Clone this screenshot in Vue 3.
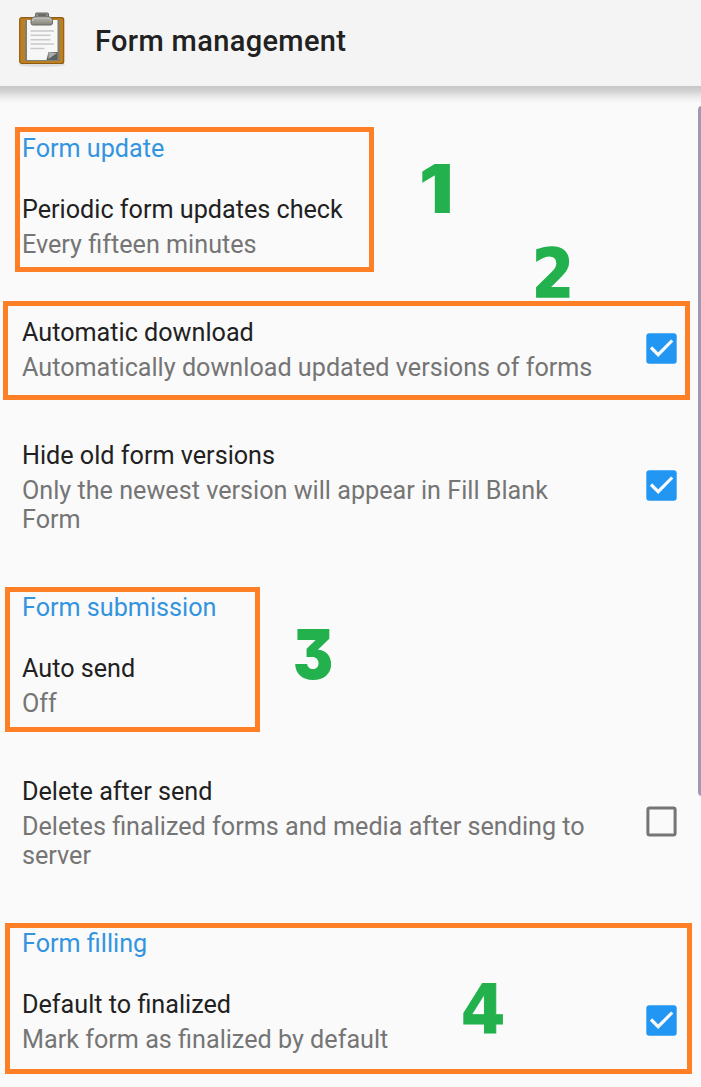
<script setup>
const sections = [
  {
    title: 'Form update',
    items: [
      { title: 'Periodic form updates check', summary: 'Every fifteen minutes' },
      { title: 'Automatic download', summary: 'Automatically download updated versions of forms', checked: true },
      { title: 'Hide old form versions', summary: 'Only the newest version will appear in Fill Blank Form', checked: true },
    ],
  },
  {
    title: 'Form submission',
    items: [
      { title: 'Auto send', summary: 'Off' },
      { title: 'Delete after send', summary: 'Deletes finalized forms and media after sending to server', checked: false },
    ],
  },
  {
    title: 'Form filling',
    items: [{ title: 'Default to finalized', summary: 'Mark form as finalized by default', checked: true }],
  },
]
</script>

<template>
  <div class="screen">
    <header class="bar">
      <svg class="logo" width="50" height="58" viewBox="0 0 50 58">
        <defs>
          <linearGradient id="clip" x1="0" y1="0" x2="0" y2="1">
            <stop offset="0" stop-color="#b9b9b0" />
            <stop offset="1" stop-color="#85857c" />
          </linearGradient>
        </defs>
        <ellipse cx="25" cy="52.500" rx="23" ry="2.500" fill="#dedede" />
        <rect x="2.700" y="5.700" width="44" height="45.800" rx="2" fill="#bd7f20" stroke="#8f5c14" stroke-width="1.200" />
        <path d="M8 8h34.500v41H8z" fill="#7d7f79" />
        <path d="M10 8h30.500v32l-8.500 8H10z" fill="#f7f7f7" />
        <path d="M31.500 40h9v8h-11z" fill="#5d615e" />
        <path d="M31.500 40l8.500 1-8.500 6z" fill="#a9adaa" />
        <path d="M13.500 19h23.500M13.500 23.200h20M13.500 27.800h20M13.500 32h23.500M13.500 36.500h14" stroke="#c9c9c9" stroke-width="1.500" />
        <path d="M18.500 6V2q0-1 1-1h11q1 0 1 1v4" fill="#8d8f88" stroke="#666a65" />
        <path d="M21 3h8" stroke="#5d605d" stroke-width="1.500" />
        <path d="M17 5h15.500q3 0 3 4v2q0 2-2 2H16q-2 0-2-2V9q0-4 3-4z" fill="url(#clip)" stroke="#686b65" />
        <path d="M15.500 9q0-3 3-3h13q2 0 3 3" fill="none" stroke="#c9cac2" />
      </svg>
      <h1>Form management</h1>
    </header>

    <main class="list">
      <section v-for="s in sections" :key="s.title">
        <h2 class="category">{{ s.title }}</h2>
        <div v-for="i in s.items" :key="i.title" class="row">
          <div class="text">
            <div class="title">{{ i.title }}</div>
            <div class="summary">{{ i.summary }}</div>
          </div>
          <svg v-if="i.checked !== undefined" class="check" width="31" height="31" viewBox="0 0 31 31">
            <template v-if="i.checked">
              <rect x="0.300" y="0.300" width="30.400" height="30.400" rx="3" fill="#2196f3" />
              <path d="M5 14.500l7.200 7.200L26.200 7.500" fill="none" stroke="#fafafa" stroke-width="3.200" />
            </template>
            <rect v-else x="1.900" y="1.900" width="27.200" height="27.200" rx="1.800" fill="none" stroke="#757575" stroke-width="3" />
          </svg>
        </div>
      </section>
    </main>

    <div class="thumb"></div>
    <div class="mark m1"></div>
    <div class="mark m2"></div>
    <div class="mark m3"></div>
    <div class="mark m4"></div>
    <span class="num n1">1</span>
    <span class="num n2">2</span>
    <span class="num n3">3</span>
    <span class="num n4">4</span>
  </div>
</template>

<style>
body { margin: 0; background: #fafafa; }
</style>

<style scoped>
.screen {
  position: relative;
  width: 701px;
  height: 1087px;
  overflow: hidden;
  background: #fafafa;
  font-family: Roboto, "Liberation Sans", sans-serif;
  font-size: 25.180px;
}
.bar {
  display: flex;
  align-items: flex-start;
  box-sizing: border-box;
  height: 86px;
  padding: 12px 0 0 17px;
  background: #f4f4f4;
}
.bar::after {
  content: "";
  position: absolute;
  top: 86px;
  left: 0;
  right: 0;
  height: 17px;
  background: linear-gradient(#c6c6c6, #d2d2d2 30%, #ececec 68%, #fafafa);
}
h1 {
  margin: 12px 0 0 28px;
  font-size: 29px;
  line-height: 34px;
  font-weight: 500;
  letter-spacing: 0.350px;
  color: #212121;
}
.list { padding: 18.800px 0 0 22px; }
.category {
  margin: 0;
  padding: 29.100px 0 2.150px;
  font-size: 25.180px;
  font-weight: 400;
  line-height: 30px;
  color: #3394e0;
}
.row {
  display: flex;
  align-items: center;
  padding: 29.100px 24px 29.100px 0;
}
.text { width: 582px; }
.title { line-height: 30px; color: #212121; }
.summary { margin-top: 5px; line-height: 29.500px; color: #757575; }
.check { margin: 0 0 4px auto; }
.thumb {
  position: absolute;
  left: 698px;
  top: 106px;
  width: 8px;
  height: 690px;
  border-radius: 5px;
  background: #9c9bb3;
}
.mark { position: absolute; box-sizing: border-box; border: 5px solid #ff7f27; }
.m1 { left: 15px; top: 127px; width: 359px; height: 145px; }
.m2 { left: 3px; top: 301px; width: 687px; height: 99px; }
.m3 { left: 5px; top: 587px; width: 255px; height: 145px; }
.m4 { left: 5px; top: 923px; width: 687px; height: 151px; }
.num {
  position: absolute;
  font: 700 67px/70px "DejaVu Sans", sans-serif;
  color: #22b14c;
  transform-origin: 0 0;
}
.n1 { left: 418.500px; top: 153px; font-size: 68px; font-family: Inter, sans-serif; font-weight: 900; transform: scaleX(1.120); }
.n2 { left: 532px; top: 239px; transform: scaleX(0.900); -webkit-text-stroke: 1.500px #22b14c; }
.n3 { left: 293px; top: 619px; font-size: 69px; font-family: Inter, sans-serif; font-weight: 900; font-feature-settings: "cv09"; transform: scaleX(0.870); }
.n4 { left: 461px; top: 975px; transform: scaleX(0.950); -webkit-text-stroke: 1px #22b14c; }
</style>
